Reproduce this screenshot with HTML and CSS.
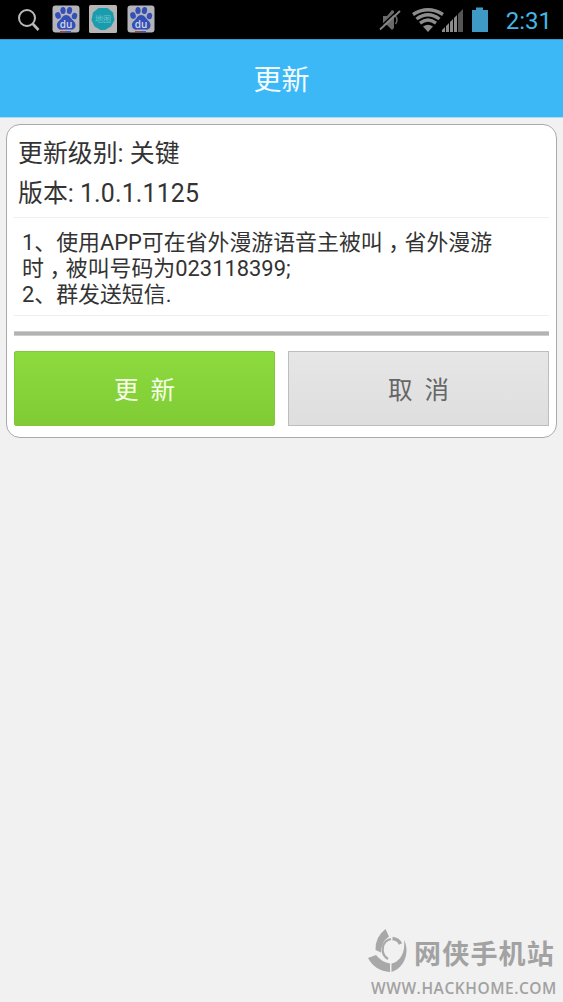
FILE: index.html
```html
<!DOCTYPE html>
<html lang="zh-CN">
<head>
<meta charset="utf-8">
<title>更新</title>
<link rel="stylesheet" href="styles.css">
</head>
<body>
<header class="status">
  <div class="status-left">
    <svg class="search" viewBox="0 0 24 24" width="24" height="24"><circle cx="10" cy="10" r="8" fill="none" stroke="#b9b9b9" stroke-width="2"/><path d="M15.500 15.500l6 6.500" stroke="#b9b9b9" stroke-width="2.600"/></svg>
    <svg width="28" height="28" viewBox="0 0 28 28">
      <g id="paw">
        <rect x=".5" y=".5" width="27" height="27" rx="3" fill="#b3b5ba"/>
        <g fill="#3450b8">
          <ellipse cx="6" cy="10.500" rx="2.800" ry="3.400" transform="rotate(-15 6 10.500)"/>
          <ellipse cx="11" cy="5.500" rx="2.600" ry="3.600"/>
          <ellipse cx="17.500" cy="5.500" rx="2.600" ry="3.600" transform="rotate(10 17.500 5.500)"/>
          <ellipse cx="22.500" cy="11" rx="2.700" ry="3.300" transform="rotate(10 22.500 11)"/>
          <path d="M14 10c-3 0-4 3-6 5s-3.500 3-3 6c.5 3 3 4 5 3.600h8.500c2 .4 4.500-.6 5-3.600.4-3-1.500-4.500-3.200-6.200S17.500 10 14 10z"/>
        </g>
        <path d="M8 26.800h6" stroke="#a03b42" stroke-width="1.400"/><path d="M14 26.800h5" stroke="#3450b8" stroke-width="1.400"/>
      </g>
      <text x="14" y="22.800" class="paw-text" text-anchor="middle">du</text>
    </svg>
    <svg width="28" height="28" viewBox="0 0 28 28"><rect width="28" height="28" rx="1.500" fill="#b7b5b6"/><path d="M9.500 3h9l5.500 4.500 1.500 7.500-3.500 6.500-6 3.500h-4.500l-6-3.500L2.500 15 4 7.500z" fill="#199dae"/><text x="14" y="17" class="badge-text" text-anchor="middle">地图</text></svg>
    <svg width="28" height="28" viewBox="0 0 28 28"><use href="#paw"/><text x="14" y="22.800" class="paw-text" text-anchor="middle">du</text></svg>
  </div>
  <div class="status-right">
    <svg width="110" height="28" viewBox="0 0 110 28">
      <path d="M4 10h4l5-6 2 1v17l-2 2-5-5H4z" fill="#696969"/><path d="M16.500 10q3 4 0 8" fill="none" stroke="#666" stroke-width="1.500"/><path d="M1 21L19 4" stroke="#000" stroke-width="1.500"/><path d="M1 23.500L21 5" stroke="#858585" stroke-width="1.800"/>
      <g fill="none" stroke="#8c8c8c" stroke-width="3.400"><path d="M34 8.500Q49 -1 64 8.500"/><path d="M37.500 13Q49 4.500 60.500 13"/><path d="M41 17.200Q49 11 57 17.200"/></g><path d="M44 20.500Q49 17 54 20.500L49 26z" fill="#8c8c8c"/>
      <g fill="#8c8c8c"><path d="M63 26v-2l3-3v5zM67 26v-6l3-3v9zM71 26V16l3-3v13z"/><path d="M75 26V12l3-3v17z"/><path d="M79 26V8l5-5v23z" fill="#555"/></g>
      <path d="M93 4h4V1.500h7V4h5v22H93z" fill="#3e9ac5"/>
    </svg>
    <span class="clock">2:31</span>
  </div>
</header>
<div class="titlebar"><h1>更新</h1></div>
<main>
  <section class="card">
    <div class="info"><p>更新级别: 关键</p><p>版本: <span class="version">1.0.1.1125</span></p></div>
    <div class="notes">
      <p>1、使用APP可在省外漫游语音主被叫<span class="comma">，</span>省外漫游</p>
      <p>时<span class="comma">，</span>被叫号码为023118399;</p>
      <p>2、群发送短信.</p>
    </div>
    <div class="bar"></div>
    <div class="actions"><button class="btn primary">更&nbsp; 新</button><button class="btn cancel">取&nbsp; 消</button></div>
  </section>
</main>
<footer class="mark">
  <div class="mark-top">
    <svg width="42" height="44" viewBox="0 0 42 44">
      <g fill="#a8a8a8">
        <path d="M18.500 0Q8 8 8.500 21l5.500 2.500Q14 13 22 7.500z"/>
        <path d="M1 29l8-3q6 7.500 14 8.500v8.500Q8 42 1 29z"/>
        <path d="M37 11c6 11 1 28-12.500 32v-8.500c9-2 14-11.500 12.500-23.500z"/>
      </g>
      <path d="M24 10C14 12 13 25 21 30" fill="none" stroke="#a8a8a8" stroke-width="2.200"/>
      <path d="M25.500 9.500q6 .5 8 5.500" fill="none" stroke="#a8a8a8" stroke-width="3.500"/>
    </svg>
    <span class="mark-name">网侠手机站</span>
  </div>
  <div class="mark-url">WWW.HACKHOME.COM</div>
</footer>
</body>
</html>
```
FILE: styles.css
```css
* { box-sizing: border-box; }
body {
  margin: 0;
  height: 1002px;
  display: flex;
  flex-direction: column;
  background: #f1f1f1;
  color: #333;
  font-family: Roboto, "Noto Sans CJK SC", sans-serif;
}
p, h1 { margin: 0; font-weight: 400; white-space: nowrap; }
.status {
  height: 39px;
  background: #000;
  display: flex;
  justify-content: space-between;
  align-items: flex-start;
}
.status svg { display: block; }
.status-left { display: flex; gap: 9.600px; padding: 5px 0 0 17px; }
.search { margin: 3px 1px 0 0; }
.paw-text { font: 600 10px "Open Sans", sans-serif; fill: #d5d8e5; }
.badge-text { font: 8px "Noto Sans CJK SC", sans-serif; fill: #6cc4cc; }
.status-right { display: flex; padding: 6px 11px 0 0; }
.clock { margin-left: 17px; line-height: 30px; font-size: 24px; color: #45b5e5; }
.titlebar {
  height: 79px;
  background: #3cb8f7;
  border-top: 1px solid #359bce;
  border-bottom: 1px solid #a9dbf4;
  display: flex;
  justify-content: center;
}
.titlebar h1 { color: #f4fbff; font-size: 28px; line-height: 82px; }
main { flex: 1; padding: 6px 6px 0; }
.card {
  height: 314px;
  background: #fff;
  border: 1px solid #aaa;
  border-radius: 14px;
  padding: 8px 7px 0;
}
.info { height: 85px; padding: 1px 4px; border-bottom: 1px solid #eee; font-size: 24.9px; line-height: 40px; }
.version { letter-spacing: .15px; }
.notes { height: 98px; padding: 12px 8px 0; border-bottom: 1px solid #eee; font-size: 21.9px; line-height: 26px; }
.comma { padding: 0 .25em; font-family: "Noto Sans CJK SC", sans-serif; font-feature-settings: "halt"; line-height: 0; }
.bar { height: 5px; margin-top: 15px; background: #b3b3b3; border: 1px solid #ccc; border-width: 1px 0; }
.actions { display: grid; grid-template-columns: 1fr 1fr; gap: 13px; margin-top: 15px; }
.btn { height: 75px; padding: 0; border: 1px solid; border-radius: 2px; font: 24.5px Roboto, "Noto Sans CJK SC", sans-serif; }
.primary { color: #f7ffe8; background: linear-gradient(#8cdb3e, #80cb35); border-color: #82c73e; }
.cancel { color: #666; background: linear-gradient(#e6e6e6, #dedede); border-color: #bdbdbd; border-radius: 0; }
.mark { align-self: flex-end; width: 196px; height: 73px; color: #a2a2a2; }
.mark-top { display: flex; height: 44px; }
.mark-name { margin-left: 5px; font: 700 27px/48px "Noto Sans CJK SC", sans-serif; letter-spacing: 1.2px; white-space: nowrap; }
.mark-url { padding-left: 4px; font: 600 15.5px/31px "Open Sans", sans-serif; letter-spacing: .55px; white-space: nowrap; }
```
